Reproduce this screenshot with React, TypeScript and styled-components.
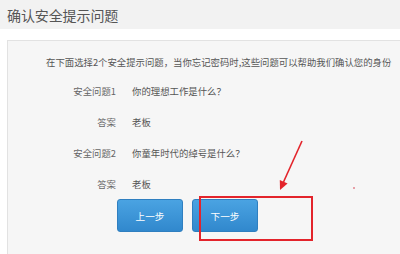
import React from "react";
import styled, { createGlobalStyle } from "styled-components";

const GlobalStyle = createGlobalStyle`
  html, body {
    margin: 0;
    padding: 0;
    background: #ffffff;
  }
  body {
    font-family: "Noto Sans CJK SC", "Noto Sans", "Liberation Sans", sans-serif;
    color: #555555;
  }
`;

const Screen = styled.div`
  position: relative;
  width: 400px;
  height: 254px;
  overflow: hidden;
  background: #ffffff;
`;

const TitleBar = styled.header`
  height: 29px;
  background: #f2f2f2;
  display: flex;
  align-items: center;
  padding-left: 7px;
`;

const Title = styled.h1`
  margin: 0;
  font-size: 14px;
  font-weight: normal;
  color: #555555;
  letter-spacing: -0.1px;
`;

const Panel = styled.section`
  margin: 11px 0 0 7px;
  border: 1px solid #e2e2e2;
  border-right: none;
  background: #f6f6f6;
  height: 260px;
  padding-top: 13px;
  box-sizing: border-box;
`;

const Intro = styled.p`
  margin: 0 0 5px 38px;
  font-size: 9.4px;
  line-height: 16px;
  white-space: nowrap;
  color: #555555;
`;

const Form = styled.div`
  display: grid;
  grid-template-columns: 108px 1fr;
  grid-auto-rows: 31px;
  column-gap: 16px;
  align-items: center;
  font-size: 9.4px;
`;

const Label = styled.span`
  text-align: right;
  color: #666666;
`;

const Value = styled.span`
  color: #555555;
`;

const Actions = styled.div`
  display: flex;
  gap: 9px;
  margin: 0 0 0 109px;
`;

const Button = styled.button`
  width: 66px;
  height: 33px;
  border: 1px solid #2f7fc0;
  border-radius: 3px;
  background: linear-gradient(#4aa3e2, #3188cd);
  color: #ffffff;
  font-family: inherit;
  font-size: 9.6px;
  padding: 0;
  cursor: pointer;
`;

const Highlight = styled.div`
  position: absolute;
  left: 199px;
  top: 196px;
  width: 114px;
  height: 45px;
  border: 2px solid #e3242b;
  box-sizing: border-box;
`;

const Arrow = styled.svg`
  position: absolute;
  left: 0;
  top: 0;
  pointer-events: none;
`;

const Speck = styled.span`
  position: absolute;
  left: 353px;
  top: 187px;
  width: 2px;
  height: 2px;
  background: #e7a0a8;
`;

const rows = [
  { label: "安全问题1", value: "你的理想工作是什么？" },
  { label: "答案", value: "老板" },
  { label: "安全问题2", value: "你童年时代的绰号是什么？" },
  { label: "答案", value: "老板" },
];

export default function App() {
  return (
    <Screen>
      <GlobalStyle />
      <TitleBar>
        <Title>确认安全提示问题</Title>
      </TitleBar>
      <Panel>
        <Intro>
          在下面选择2个安全提示问题，当你忘记密码时,这些问题可以帮助我们确认您的身份
        </Intro>
        <Form>
          {rows.map((r, i) => (
            <React.Fragment key={i}>
              <Label>{r.label}</Label>
              <Value>{r.value}</Value>
            </React.Fragment>
          ))}
        </Form>
        <Actions>
          <Button>上一步</Button>
          <Button>下一步</Button>
        </Actions>
      </Panel>
      <Highlight />
      <Arrow width="400" height="254" viewBox="0 0 400 254">
        <line x1="302" y1="141" x2="283.5" y2="182" stroke="#e3242b" strokeWidth="1.6" />
        <polygon points="280,190 287.6,183.4 279.8,180" fill="#e3242b" />
      </Arrow>
      <Speck />
    </Screen>
  );
}
